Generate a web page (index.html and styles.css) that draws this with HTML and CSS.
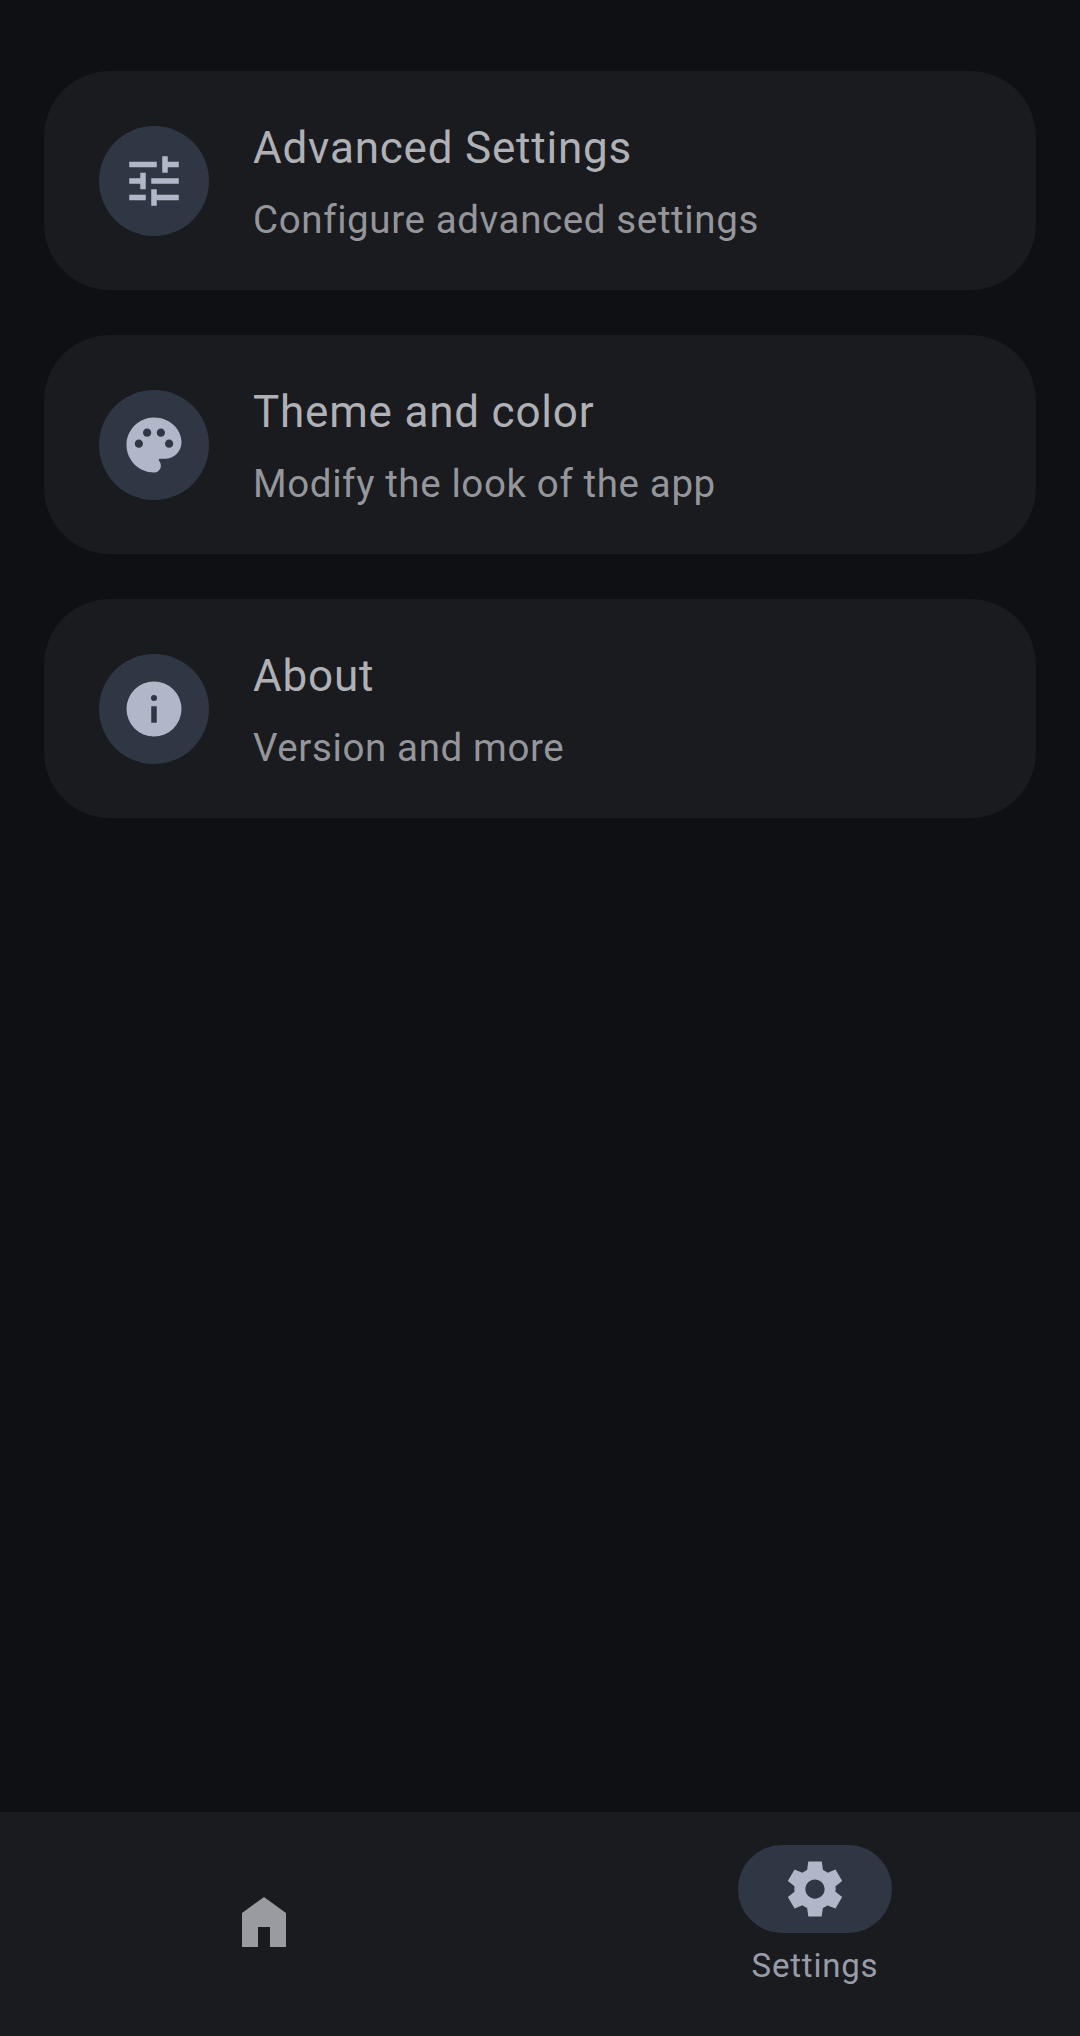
FILE: index.html
```html
<!DOCTYPE html>
<html lang="en">
<head>
  <meta charset="UTF-8">
  <meta name="viewport" content="width=device-width, initial-scale=1.0">
  <title>Settings</title>
  <link rel="stylesheet" href="styles.css">
</head>
<body>
  <main class="settings-list">
    <div class="card">
      <div class="card-icon">
        <svg viewBox="0 0 24 24"><path d="M3 17v2h6v-2H3zM3 5v2h10V5H3zm10 16v-2h8v-2h-8v-2h-2v6h2zM7 9v2H3v2h4v2h2V9H7zm14 4v-2H11v2h10zm-6-4h2V7h4V5h-4V3h-2v6z"/></svg>
      </div>
      <div class="card-text">
        <div class="card-title">Advanced Settings</div>
        <div class="card-sub">Configure advanced settings</div>
      </div>
    </div>
    <div class="card">
      <div class="card-icon">
        <svg viewBox="0 0 24 24"><path d="M12 2C6.49 2 2 6.49 2 12s4.49 10 10 10c1.38 0 2.5-1.12 2.5-2.5 0-.61-.23-1.2-.64-1.67-.08-.1-.13-.21-.13-.33 0-.28.22-.5.5-.5H16c3.31 0 6-2.69 6-6 0-4.96-4.49-9-10-9zm5.5 11c-.83 0-1.5-.67-1.5-1.5s.67-1.5 1.5-1.5 1.5.67 1.5 1.5-.67 1.5-1.5 1.5zm-3-4c-.83 0-1.5-.67-1.5-1.5S13.67 6 14.5 6s1.5.67 1.5 1.5S15.33 9 14.5 9zM5 11.5c0-.83.67-1.5 1.5-1.5s1.5.67 1.5 1.5S7.33 13 6.5 13 5 12.33 5 11.5zm6-4c0 .83-.67 1.5-1.5 1.5S8 8.33 8 7.5 8.67 6 9.5 6s1.5.67 1.5 1.5z"/></svg>
      </div>
      <div class="card-text">
        <div class="card-title">Theme and color</div>
        <div class="card-sub">Modify the look of the app</div>
      </div>
    </div>
    <div class="card">
      <div class="card-icon">
        <svg viewBox="0 0 24 24"><path fill-rule="evenodd" d="M12 2a10 10 0 1 0 0 20 10 10 0 0 0 0-20zm1 15h-2v-6h2v6zM12 9.1a1.1 1.1 0 1 1 0-2.2 1.1 1.1 0 0 1 0 2.2z"/></svg>
      </div>
      <div class="card-text">
        <div class="card-title">About</div>
        <div class="card-sub">Version and more</div>
      </div>
    </div>
  </main>

  <nav class="bottom-nav">
    <div class="nav-item nav-home">
      <svg class="home-icon" viewBox="0 0 44 50"><path d="M22 0 44 16V50H28V30H16V50H0V16z"/></svg>
    </div>
    <div class="nav-item">
      <div class="nav-pill">
        <svg viewBox="0 0 24 24"><path d="M19.44 12.99l-.01.02c.04-.33.08-.67.08-1.01 0-.34-.03-.66-.07-.99l.01.02 2.44-1.92-2.43-4.22-2.87 1.16.01.01c-.52-.4-1.09-.74-1.71-1h.01L14.44 2H9.57l-.44 3.07h.01c-.62.26-1.19.6-1.71 1l.01-.01-2.88-1.17-2.44 4.22 2.44 1.92.01-.02c-.04.33-.07.65-.07.99 0 .34.03.68.08 1.01l-.01-.02-2.1 1.65-.33.26 2.43 4.2 2.88-1.15-.02-.04c.53.41 1.1.75 1.73 1.01h-.03L9.58 22h4.85s.03-.18.06-.42l.38-2.65h-.01c.62-.26 1.2-.6 1.73-1.01l-.02.04 2.88 1.15 2.43-4.2s-.14-.12-.33-.26l-2.11-1.66zM12 15.5c-1.93 0-3.5-1.57-3.5-3.5s1.57-3.5 3.5-3.5 3.5 1.57 3.5 3.5-1.57 3.5-3.5 3.5z"/></svg>
      </div>
      <div class="nav-label">Settings</div>
    </div>
  </nav>
</body>
</html>
```

FILE: styles.css
```css
* {
  margin: 0;
  padding: 0;
  box-sizing: border-box;
}

body {
  background: #0e1014;
  font-family: Roboto, sans-serif;
  height: 2036px;
  display: flex;
  flex-direction: column;
  overflow: hidden;
}

/* Lista */
.settings-list {
  flex: 1;
  padding: 71px 44px 0;
  display: flex;
  flex-direction: column;
  gap: 45px;
}

.card {
  height: 219px;
  background: #191b1f;
  border-radius: 66px;
  padding: 0 55px;
  display: flex;
  align-items: center;
  gap: 44px;
}

.card-icon {
  width: 110px;
  height: 110px;
  border-radius: 50%;
  background: #303744;
  display: flex;
  align-items: center;
  justify-content: center;
}

.card-icon svg {
  width: 66px;
  height: 66px;
  fill: #b1b7c9;
}

.card-text {
  padding-top: 6px;
}

.card-title {
  font-size: 44px;
  line-height: 55px;
  letter-spacing: 0.8px;
  color: #b0b1b4;
}

.card-sub {
  font-size: 38.5px;
  line-height: 55px;
  margin-top: 16px;
  letter-spacing: 0.62px;
  color: #959699;
}

/* Barra inferior */
.bottom-nav {
  height: 224px;
  background: #191b1f;
  display: grid;
  grid-template-columns: 528px 530px;
  gap: 22px;
  padding-top: 33px;
}

.nav-item {
  display: flex;
  flex-direction: column;
  align-items: center;
}

.nav-home {
  padding-top: 52px;
}

.home-icon {
  width: 44px;
  height: 50px;
  fill: #9a9ba0;
}

.nav-pill {
  width: 154px;
  height: 88px;
  border-radius: 44px;
  background: #303744;
  display: flex;
  align-items: center;
  justify-content: center;
}

.nav-pill svg {
  width: 66px;
  height: 66px;
  fill: #b1b7c9;
}

.nav-label {
  font-size: 33px;
  line-height: 44px;
  margin-top: 11px;
  letter-spacing: 0.8px;
  color: #989ca9;
}
```
